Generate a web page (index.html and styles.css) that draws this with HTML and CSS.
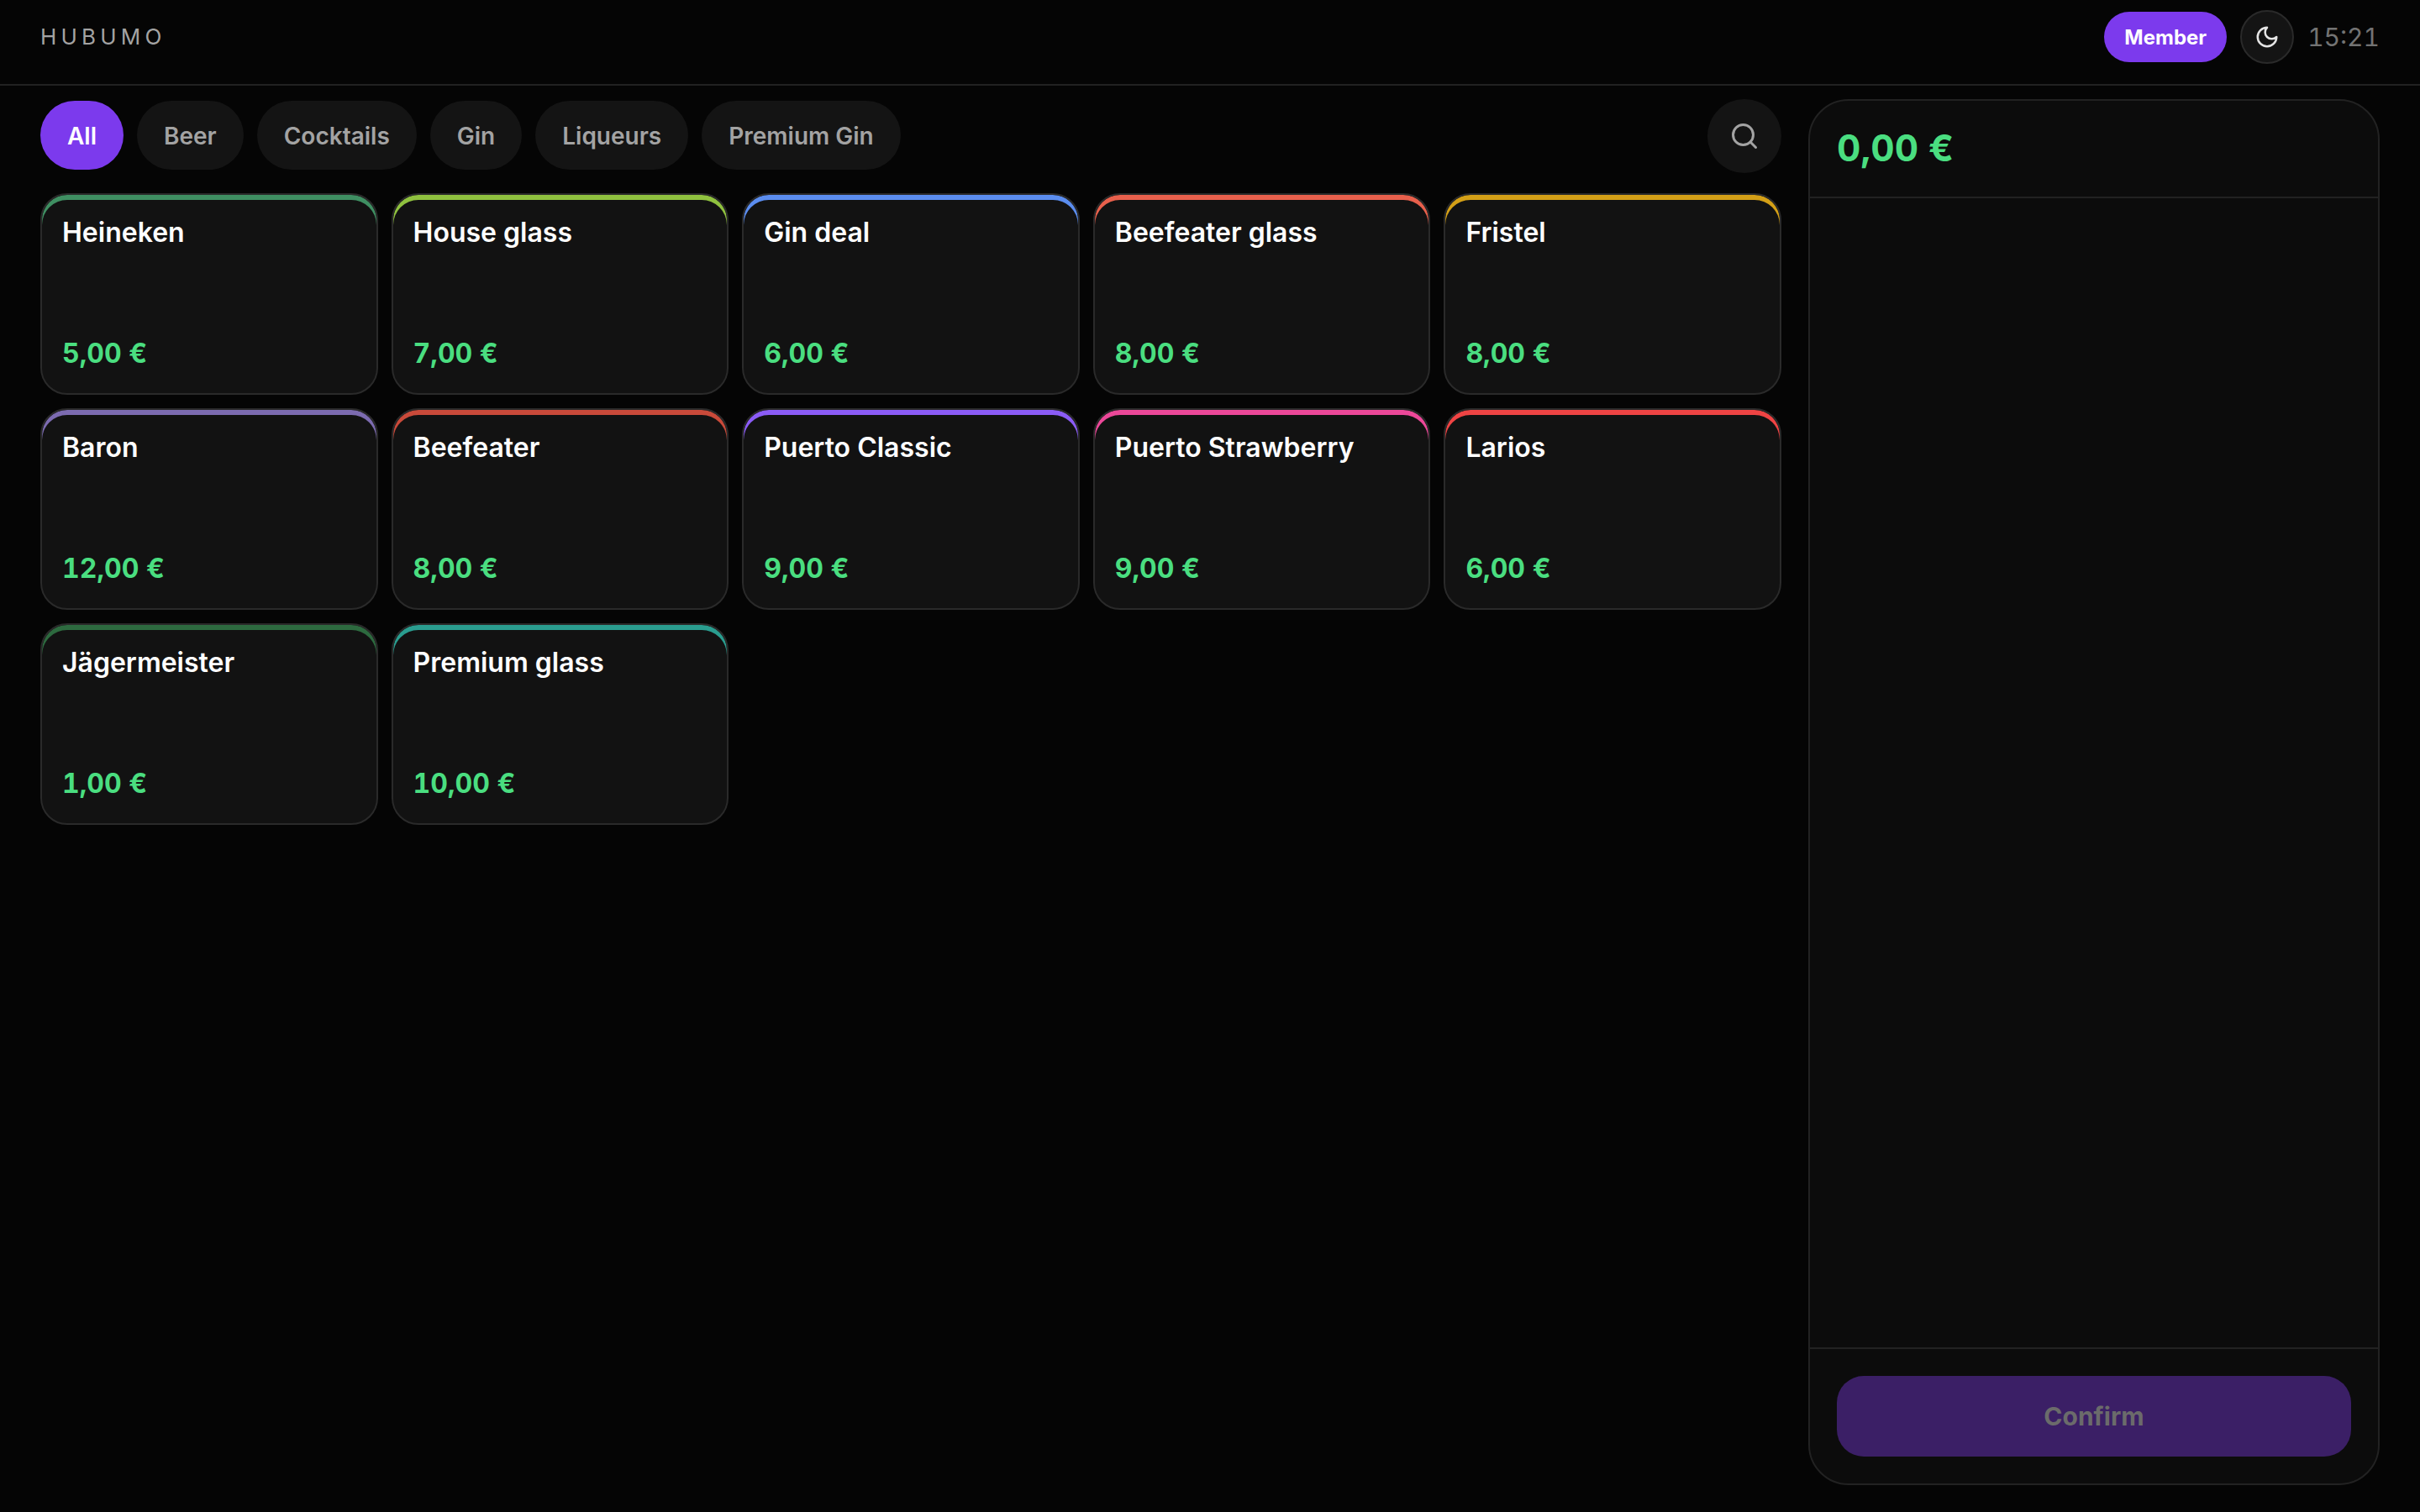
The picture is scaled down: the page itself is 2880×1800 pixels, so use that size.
FILE: index.html
```html
<!DOCTYPE html>
<html lang="en">
<head>
<meta charset="utf-8">
<meta name="viewport" content="width=device-width, initial-scale=1">
<title>Hubumo</title>
<link rel="stylesheet" href="styles.css">
</head>
<body>
<header class="topbar">
  <span class="brand">HUBUMO</span>
  <div class="topbar-actions">
    <button type="button" class="member">Member</button>
    <button type="button" class="theme" aria-label="Toggle theme">
      <svg class="icon-moon" viewBox="0 0 24 24" aria-hidden="true"><path d="M12 3a6 6 0 0 0 9 9 9 9 0 1 1-9-9Z"/></svg>
    </button>
    <time class="clock">15:21</time>
  </div>
</header>
<main class="layout">
  <section class="catalog">
    <div class="toolbar">
      <nav class="filters" aria-label="Categories">
        <button type="button" class="pill active">All</button>
        <button type="button" class="pill">Beer</button>
        <button type="button" class="pill">Cocktails</button>
        <button type="button" class="pill">Gin</button>
        <button type="button" class="pill">Liqueurs</button>
        <button type="button" class="pill">Premium Gin</button>
      </nav>
      <button type="button" class="search" aria-label="Search">
        <svg class="icon-search" viewBox="0 0 24 24" aria-hidden="true"><circle cx="11" cy="11" r="8"/><path d="m21 21-4.3-4.3"/></svg>
      </button>
    </div>
    <div class="products">
      <button type="button" class="card green"><span class="name">Heineken</span><span class="price">5,00 €</span></button>
      <button type="button" class="card lime"><span class="name">House glass</span><span class="price">7,00 €</span></button>
      <button type="button" class="card blue"><span class="name">Gin deal</span><span class="price">6,00 €</span></button>
      <button type="button" class="card coral"><span class="name">Beefeater glass</span><span class="price">8,00 €</span></button>
      <button type="button" class="card amber"><span class="name">Fristel</span><span class="price">8,00 €</span></button>
      <button type="button" class="card lavender"><span class="name">Baron</span><span class="price">12,00 €</span></button>
      <button type="button" class="card brick"><span class="name">Beefeater</span><span class="price">8,00 €</span></button>
      <button type="button" class="card violet"><span class="name">Puerto Classic</span><span class="price">9,00 €</span></button>
      <button type="button" class="card pink"><span class="name">Puerto Strawberry</span><span class="price">9,00 €</span></button>
      <button type="button" class="card red"><span class="name">Larios</span><span class="price">6,00 €</span></button>
      <button type="button" class="card forest"><span class="name">Jägermeister</span><span class="price">1,00 €</span></button>
      <button type="button" class="card teal"><span class="name">Premium glass</span><span class="price">10,00 €</span></button>
    </div>
  </section>
  <aside class="order">
    <div class="order-total">0,00 €</div>
    <div class="order-items"></div>
    <div class="order-footer"><button type="button" class="confirm" disabled>Confirm</button></div>
  </aside>
</main>
</body>
</html>
```
FILE: styles.css
```css
* { box-sizing: border-box; }

body {
  margin: 0;
  min-height: 100vh;
  display: flex;
  flex-direction: column;
  background: #050505;
  color: #fff;
  font-family: Inter, "Liberation Sans", sans-serif;
}

button {
  margin: 0;
  padding: 0;
  border: 0;
  font: inherit;
  color: inherit;
  cursor: pointer;
}

svg {
  display: block;
  fill: none;
  stroke: currentColor;
  stroke-linecap: round;
  stroke-linejoin: round;
}

.topbar {
  display: flex;
  align-items: center;
  justify-content: space-between;
  padding: 12px 48px 24px;
  border-bottom: 2px solid #222;
}

.brand {
  font-size: 26px;
  font-weight: 400;
  line-height: 32px;
  letter-spacing: 0.2em;
  color: #a3a3a3;
}

.topbar-actions {
  display: flex;
  align-items: center;
  gap: 16px;
}

.member {
  height: 60px;
  padding: 0 24px;
  border-radius: 30px;
  background: #7c3aed;
  font-size: 24px;
  font-weight: 700;
}

.theme {
  display: grid;
  place-items: center;
  width: 64px;
  height: 64px;
  border: 2px solid #2a2a2a;
  border-radius: 50%;
  background: #141414;
  color: #e5e5e5;
}

.icon-moon {
  width: 30px;
  height: 30px;
  stroke-width: 2;
}

.clock {
  font-size: 30px;
  font-weight: 400;
  line-height: 36px;
  font-variant-numeric: tabular-nums;
  color: #737373;
}

.layout {
  flex: 1;
  display: grid;
  grid-template-columns: minmax(0, 1fr) 680px;
  gap: 32px;
  padding: 16px 48px 32px;
}

.toolbar {
  display: flex;
  align-items: center;
  justify-content: space-between;
  gap: 16px;
  margin-bottom: 24px;
}

.filters {
  display: flex;
  gap: 16px;
  padding: 2px 0 4px;
}

.pill {
  padding: 24px 32px 22px;
  border-radius: 41px;
  background: #141414;
  color: #a3a3a3;
  font-size: 28px;
  font-weight: 600;
  line-height: 36px;
}

.pill.active {
  background: #7c3aed;
  color: #fff;
}

.search {
  display: grid;
  place-items: center;
  width: 88px;
  height: 88px;
  border-radius: 50%;
  background: #141414;
  color: #a3a3a3;
}

.icon-search {
  width: 36px;
  height: 36px;
  stroke-width: 2;
}

.products {
  display: grid;
  grid-template-columns: repeat(5, minmax(0, 1fr));
  gap: 16px;
}

.card {
  display: flex;
  flex-direction: column;
  align-items: flex-start;
  justify-content: space-between;
  min-height: 240px;
  padding: 24px;
  border: 2px solid #2a2a2a;
  border-radius: 32px;
  background: #121212;
  box-shadow: inset 0 6px 0 var(--accent);
  text-align: left;
}

.name {
  font-size: 32px;
  font-weight: 600;
  line-height: 42px;
}

.price {
  font-size: 32px;
  font-weight: 700;
  line-height: 46px;
  font-variant-numeric: tabular-nums;
  color: #4ade80;
}

.green { --accent: #3f8f62; }
.lime { --accent: #8fc13f; }
.blue { --accent: #5b8def; }
.coral { --accent: #e8604c; }
.amber { --accent: #d4a017; }
.lavender { --accent: #7c6bb0; }
.brick { --accent: #c94a3a; }
.violet { --accent: #8b5cf6; }
.pink { --accent: #ec4899; }
.red { --accent: #ef4444; }
.forest { --accent: #2d6a3f; }
.teal { --accent: #2a9d8f; }

.order {
  display: flex;
  flex-direction: column;
  border: 2px solid #222;
  border-radius: 48px;
  background: #0c0c0c;
  overflow: hidden;
}

.order-total {
  padding: 28px 32px 30px;
  border-bottom: 2px solid #222;
  font-size: 44px;
  font-weight: 700;
  line-height: 56px;
  font-variant-numeric: tabular-nums;
  color: #4ade80;
}

.order-items { flex: 1; }

.order-footer {
  padding: 32px;
  border-top: 2px solid #222;
}

.confirm {
  width: 100%;
  height: 96px;
  border-radius: 32px;
  background: #3b1f66;
  color: #6b6b6b;
  font-size: 30px;
  font-weight: 700;
}
```
